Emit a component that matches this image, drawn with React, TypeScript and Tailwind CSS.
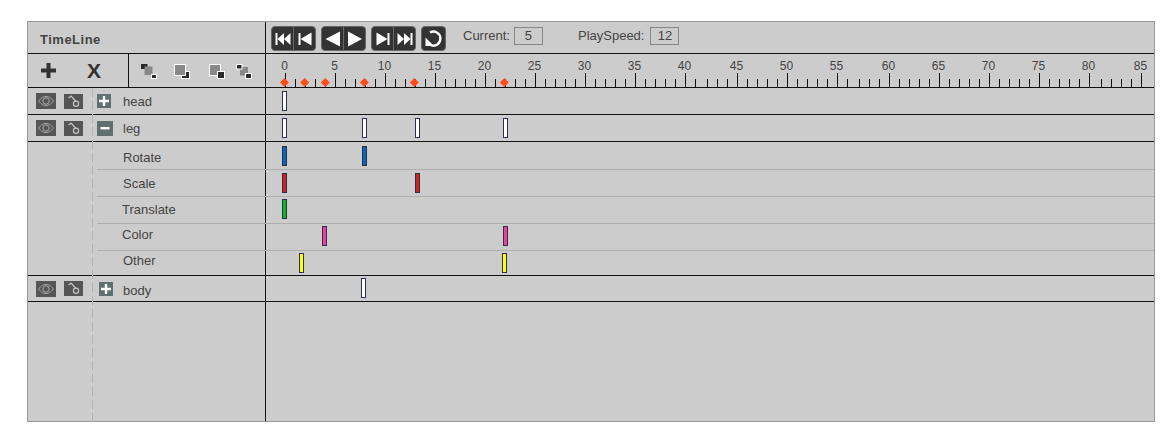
const FONT = "font-['Liberation_Sans',Arial,sans-serif]"

// x of every ruler mark, in page pixels; three steps in the source are 12px instead of 10
const marks: number[] = []
{
  let x = 285
  for (let n = 0; n <= 85; n++) {
    marks.push(x)
    x += n === 41 || n === 56 || n === 80 ? 12 : 10
  }
}

const DIAMONDS = [284.5, 304.7, 325.3, 364.3, 414.3, 504.3]

function Ruler() {
  return (
    <svg className="absolute left-0 top-0 h-[34px] w-[889px]" viewBox="266 54 889 34">
      {marks.map((x, n) => (
        <line key={n} x1={x + 0.5} x2={x + 0.5} y1={n % 5 === 0 ? 73 : 79} y2={87} stroke="#111" />
      ))}
      {marks.map((x, n) =>
        n % 5 === 0 ? (
          <text key={n} x={x - 0.5} y={70} textAnchor="middle" fontSize={12} fill="#444" fontFamily="'Liberation Sans',Arial,sans-serif">
            {n}
          </text>
        ) : null,
      )}
      {DIAMONDS.map(x => (
        <path key={x} d={`M${x} 78l4.5 4.5-4.5 4.5-4.5-4.5z`} fill="#ff4d1a" />
      ))}
    </svg>
  )
}

function Transport({ d }: { d: string }) {
  return (
    <span className="flex h-full flex-1 items-center justify-center">
      <svg width="18" height="18" viewBox="0 0 18 18" fill="#fff">
        <path d={d} />
      </svg>
    </span>
  )
}

function BtnGroup({ a, b }: { a: string; b: string }) {
  return (
    <div className="flex h-[25px] w-[45px] rounded-[4px] border border-[#666] bg-[#333]">
      <Transport d={a} />
      <div className="w-px bg-[#666]" />
      <Transport d={b} />
    </div>
  )
}

function EyeBtn() {
  return (
    <span className="flex h-[16px] w-[20px] items-center justify-center bg-[#555]">
      <svg width="16" height="12" viewBox="0 0 16 12" fill="none" stroke="#aaa">
        <path d="M.5 6c3-3.6 5-4.5 7.500-4.500s4.500 .9 7.500 4.500c-3 3.600-5 4.500-7.500 4.500S3.500 9.600 .5 6z" />
        <circle cx="8" cy="6" r="3.2" />
      </svg>
    </span>
  )
}

function KeyBtn() {
  return (
    <span className="flex h-[15px] w-[19px] items-center justify-center bg-[#555]">
      <svg width="17" height="13" viewBox="0 0 17 13" fill="none" stroke="#c4c4c4" strokeWidth="1.2">
        <path d="M3.500 3l2.500-2 5 5.500" />
        <circle cx="11" cy="8.8" r="2.6" />
      </svg>
    </span>
  )
}

function Toggle({ open, w, h }: { open?: boolean; w: string; h: string }) {
  return (
    <span className={`flex items-center justify-center bg-[#607070] ${w} ${h}`}>
      <svg width="10" height="10" viewBox="0 0 10 10" fill="#fff">
        {open ? <rect x="0.5" y="4" width="9" height="2.4" /> : <path d="M3.800 0h2.400v3.800H10v2.400H6.200V10H3.800V6.200H0V3.800h3.800z" />}
      </svg>
    </span>
  )
}

function ArrangeIcon({ kind }: { kind: 0 | 1 | 2 | 3 }) {
  const dark = '#2a2a2a'
  const mid = '#888'
  return (
    <svg className="block" width="16" height="15" viewBox="0 0 16 15" stroke="#fff">
      {kind === 0 && (
        <>
          <rect x="0" y="0" width="6.5" height="5" fill={dark} stroke="none" />
          <rect x="3.5" y="2.5" width="8" height="8.5" fill={mid} stroke="none" />
          <rect x="10.5" y="10.5" width="5" height="4" fill={dark} />
        </>
      )}
      {kind === 1 && (
        <>
          <rect x="7.5" y="7.5" width="8" height="7" fill={dark} />
          <rect x=".5" y=".5" width="11" height="11" fill={mid} />
        </>
      )}
      {kind === 2 && (
        <>
          <rect x=".5" y=".5" width="11" height="11" fill={mid} />
          <rect x="8.5" y="7.5" width="7" height="7" fill={dark} />
        </>
      )}
      {kind === 3 && (
        <>
          <rect x="4" y="3" width="8" height="8.5" fill={mid} stroke="none" />
          <rect x=".5" y=".5" width="5.5" height="4.5" fill={dark} />
          <rect x="9.5" y="9.5" width="6" height="5" fill={dark} />
        </>
      )}
    </svg>
  )
}

function Key({ x, top, fill = 'bg-white' }: { x: number; top: string; fill?: string }) {
  return <span className={`absolute h-[20px] w-[5px] border border-[#2a3048] ${top} ${fill}`} style={{ left: x - 266 }} />
}

function ObjectRow({ name, keys, toggle, h = 'h-[27px]', top = 'top-[3px]', nameClass = 'pt-px' }: { name: string; keys: number[]; toggle: React.ReactNode; h?: string; top?: string; nameClass?: string }) {
  return (
    <div className={`flex ${h} border-b border-[#111]`}>
      <div className="flex w-[237px] shrink-0 items-center pl-[8px]">
        <EyeBtn />
        <span className="ml-[8px]"><KeyBtn /></span>
        <span className="ml-[14px] w-[26px]">{toggle}</span>
        <span className={`text-[13px] text-[#444] ${nameClass}`}>{name}</span>
      </div>
      <div className="relative flex-1 border-l border-[#111]">
        {keys.map(x => <Key key={x} x={x} top={top} />)}
      </div>
    </div>
  )
}

function TrackRow({ name, keys, fill, h = 'h-[27px]', top, labelClass, last }: { name: string; keys: number[]; fill: string; h?: string; top: string; labelClass: string; last?: boolean }) {
  return (
    <div className={`relative flex ${h} ${last ? 'border-b border-[#111]' : ''}`}>
      <div className={`flex w-[237px] shrink-0 items-center text-[13px] text-[#444] ${labelClass}`}>{name}</div>
      <div className="relative flex-1 border-l border-[#111]">
        {keys.map(x => <Key key={x} x={x} top={top} fill={fill} />)}
      </div>
      {!last && <div className="absolute bottom-0 left-[69px] right-0 h-px bg-[#aeaeae]" />}
    </div>
  )
}

export default function App() {
  return (
    <div className={`h-[429px] w-[1164px] bg-white pl-[27px] pr-[9px] pt-[21px] ${FONT}`}>
      <div className="relative h-[401px] w-[1128px] border border-[#999] bg-[#ccc]">
        {/* Title and transport */}
        <div className="flex h-[32px] border-b border-[#111]">
          <div className="flex w-[237px] shrink-0 items-center pl-[12px] pt-[5px] text-[13px] font-bold tracking-[0.5px] text-[#444]">TimeLine</div>
          <div className="flex flex-1 items-center gap-[5px] border-l border-[#111] pl-[5px] pt-[2px]">
            <BtnGroup a="M1.500 3h2v12h-2zM3.500 9L10 3v12zM10 9l6.500-6v12z" b="M2.500 3h2v12h-2zM4.500 9l11-6.500v13z" />
            <BtnGroup a="M16 1.500v15L1.500 9z" b="M2 1.500v15L16 9z" />
            <BtnGroup a="M13.500 3h2v12h-2zM2.500 2.500l11 6.500-11 6.500z" b="M14.500 3h2v12h-2zM1.500 3L8 9l-6.500 6zM8 3l6.500 6L8 15z" />
            <div className="flex h-[25px] w-[25px] items-center justify-center rounded-[4px] border border-[#666] bg-[#333]">
              <svg width="19" height="19" viewBox="0 0 19 19" fill="none" stroke="#fff" strokeWidth="2.4">
                <path d="M6 3.500A7 7 0 1 1 6.500 16" />
                <path d="M1.500 8.500v8.500h8.500z" fill="#fff" stroke="none" />
              </svg>
            </div>
            <span className="mb-[5px] ml-[12px] text-[13px] text-[#444]">Current:</span>
            <span className="mb-[5px] -ml-px flex h-[18px] w-[29px] items-center justify-center border border-[#888] text-[13px] text-[#444]">5</span>
            <span className="mb-[5px] ml-[30px] text-[13px] text-[#444]">PlaySpeed:</span>
            <span className="mb-[5px] ml-px flex h-[18px] w-[29px] items-center justify-center border border-[#888] text-[13px] text-[#444]">12</span>
          </div>
        </div>

        {/* Tools and ruler */}
        <div className="flex h-[34px] border-b border-[#111]">
          <div className="flex w-[101px] shrink-0 items-center border-r border-[#111]">
            <svg className="mb-px ml-[13px]" width="15" height="15" viewBox="0 0 15 15" fill="#333">
              <path d="M5.500 0h4v5.500H15v4H9.500V15h-4V9.500H0v-4h5.500z" />
            </svg>
            <span className="ml-[31px] text-[21px] leading-none font-bold text-[#333]">X</span>
          </div>
          <div className="flex w-[136px] shrink-0 items-center pl-[12px] pt-[2px]">
            <ArrangeIcon kind={0} />
            <span className="ml-[17px]"><ArrangeIcon kind={1} /></span>
            <span className="ml-[19px]"><ArrangeIcon kind={2} /></span>
            <span className="ml-[11px]"><ArrangeIcon kind={3} /></span>
          </div>
          <div className="relative flex-1 border-l border-[#111]">
            <Ruler />
          </div>
        </div>

        <ObjectRow name="head" keys={[282]} toggle={<Toggle w="w-[14px]" h="h-[14px]" />} />
        <ObjectRow name="leg" keys={[282, 362, 415, 503]} toggle={<Toggle open w="w-[16px]" h="h-[15px]" />} />
        <TrackRow name="Rotate" keys={[282, 362]} fill="bg-[#0a64b8]" h="h-[28px]" top="top-[4px]" labelClass="pl-[95px] pt-[4px]" />
        <TrackRow name="Scale" keys={[282, 415]} fill="bg-[#d42020]" top="top-[3px]" labelClass="pl-[95px]" />
        <TrackRow name="Translate" keys={[282]} fill="bg-[#0cb81c]" top="top-[2px]" labelClass="pl-[94px] pb-[2px]" />
        <TrackRow name="Color" keys={[322, 503]} fill="bg-[#f0409c]" top="top-[2px]" labelClass="pl-[94px] pb-[6px]" />
        <TrackRow name="Other" keys={[299, 502]} fill="bg-[#ffff00]" h="h-[25px]" top="top-[2px]" labelClass="pl-[95px] pb-[4px]" last />
        <ObjectRow name="body" keys={[361]} toggle={<span className="ml-[2px] block"><Toggle w="w-[14px]" h="h-[14px]" /></span>} h="h-[26px]" top="top-[2px]" nameClass="pt-[4px]" />

        {/* Rest of the split */}
        <div className="flex h-[119px]">
          <div className="w-[237px] shrink-0" />
          <div className="flex-1 border-l border-[#111]" />
        </div>

        {/* Dashed divider over the rows */}
        <div className="absolute -bottom-px left-[64px] top-[66px] w-px bg-[repeating-linear-gradient(to_bottom,#b4b4b4_0_9px,transparent_9px_13px)]" />
      </div>
    </div>
  )
}
